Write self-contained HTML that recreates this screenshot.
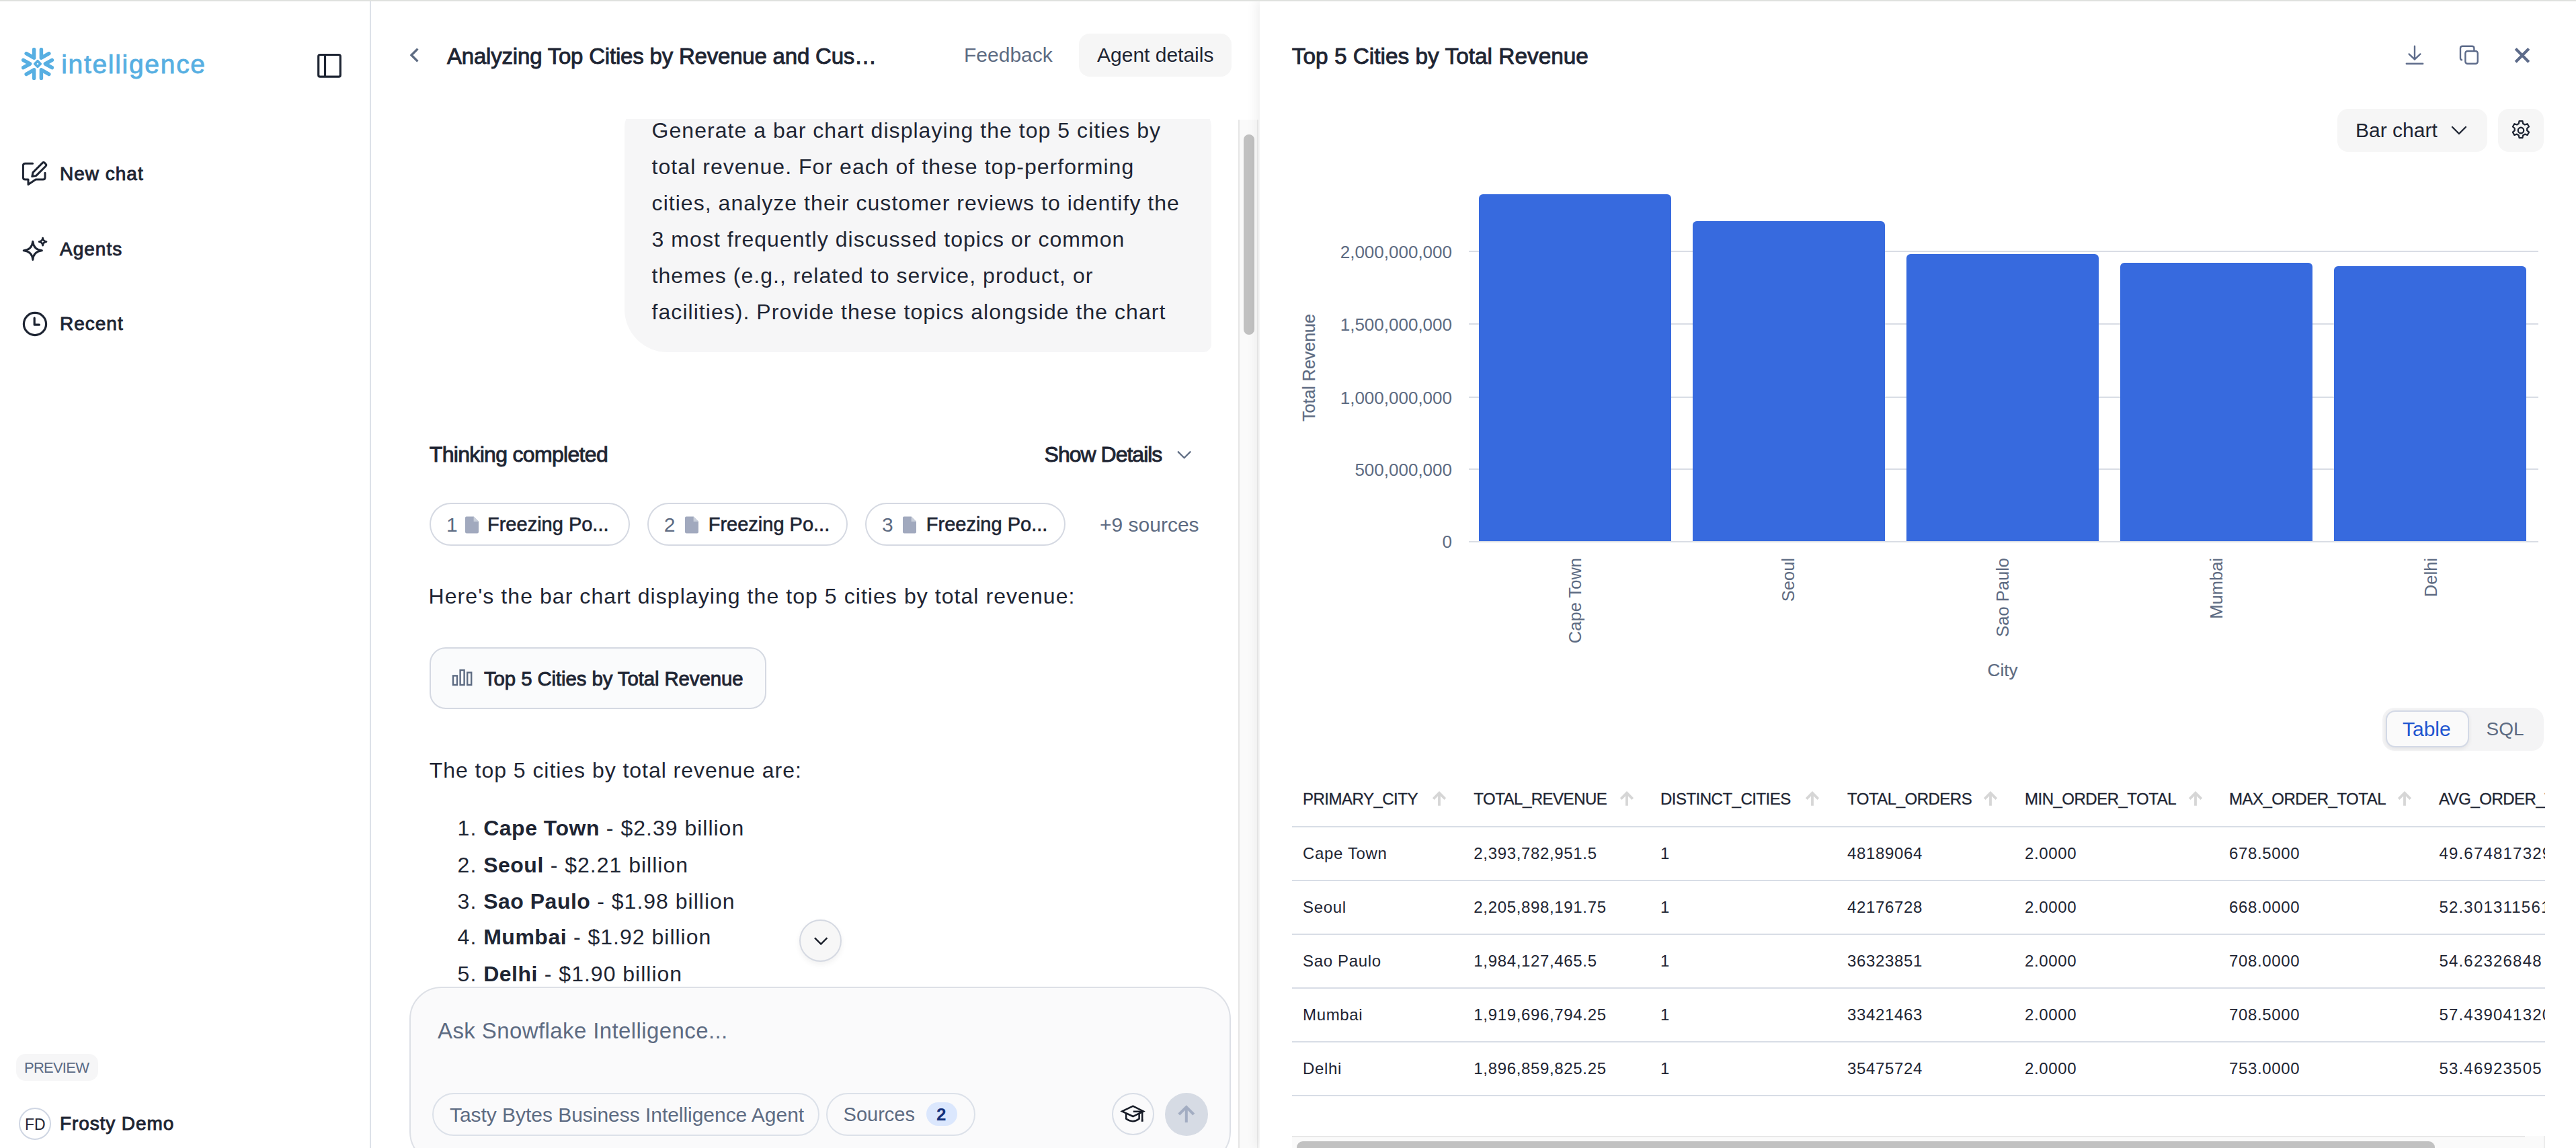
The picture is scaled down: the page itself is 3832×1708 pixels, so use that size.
<!DOCTYPE html>
<html><head><meta charset="utf-8">
<style>
html,body{margin:0;padding:0;background:#fff;overflow:hidden;}
#root{zoom:2;position:relative;width:1916px;height:854px;overflow:hidden;background:#fff;font-family:"Liberation Sans",sans-serif;color:#1e2533;}
.a{position:absolute;white-space:nowrap;line-height:1;}
.topbar{position:absolute;left:0;top:0;width:1916px;height:1px;background:#dfe1de;z-index:50;}
#side{position:absolute;left:0;top:0;width:275px;height:854px;border-right:1px solid #dde1e9;background:#fff;}
#mid{position:absolute;left:276px;top:0;width:661px;height:854px;background:#fff;}
#right{position:absolute;left:937px;top:0;width:979px;height:854px;background:#fff;box-shadow:-2px 0 8px rgba(0,0,0,0.07);}
svg{display:block;}
.sb{-webkit-text-stroke:0.45px currentColor;}
.md{-webkit-text-stroke:0.3px currentColor;}
</style></head>
<body><div id="root">
<div class="topbar"></div>

<!-- SIDEBAR -->
<div id="side">
  <svg class="a" style="left:16px;top:35.5px" width="24" height="24" viewBox="0 0 24 24" fill="none" stroke="#57afe2" stroke-width="2.75" stroke-linecap="round" stroke-linejoin="round">
    <path d="M9.3 1.3V7.6L3.6 4.3"/>
    <path d="M14.7 1.3V7.6L20.4 4.3"/>
    <path d="M9.3 22.7V16.4L3.6 19.7"/>
    <path d="M14.7 22.7V16.4L20.4 19.7"/>
    <path d="M1.3 9.2L6.3 12L1.3 14.8"/>
    <path d="M22.7 9.2L17.7 12L22.7 14.8"/>
    <path d="M12 9.9L14.1 12L12 14.1L9.9 12Z" stroke-width="1.9"/>
  </svg>
  <div class="a" style="left:45.6px;top:37.9px;font-size:19.5px;letter-spacing:0.85px;color:#57afe2;-webkit-text-stroke:0.4px #57afe2;">intelligence</div>
  <svg class="a" style="left:235px;top:39px" width="20" height="20" viewBox="0 0 20 20" fill="none" stroke="#1e2533" stroke-width="1.6">
    <rect x="1.85" y="1.75" width="16.3" height="16.3" rx="1.2"/>
    <path d="M6.75 1.75V18.05"/>
  </svg>

  <!-- nav -->
  <svg class="a" style="left:16px;top:119px" width="20" height="20" viewBox="0 0 20 20" fill="none" stroke="#1e2533" stroke-width="1.5" stroke-linejoin="round" stroke-linecap="round">
    <path d="M8.3 2.6H2.7Q1.2 2.6 1.2 4.1V13Q1.2 14.5 2.7 14.5H5V18.3L10.6 14.5H16Q17.5 14.5 17.5 13V9.6"/>
    <path d="M7.9 12.3L8.5 9.3L15.6 2.2Q16.4 1.4 17.2 2.2L18 3Q18.8 3.8 18 4.6L10.9 11.7Z"/>
  </svg>
  <div class="a sb" style="left:44.5px;top:122.5px;font-size:14px;letter-spacing:0.5px;">New chat</div>

  <svg class="a" style="left:16px;top:176px" width="20" height="20" viewBox="0 0 20 20" fill="none" stroke="#1e2533" stroke-width="1.5" stroke-linejoin="round">
    <path d="M8.4 3.6Q9 9.8 15.2 10.4Q9 11 8.4 17.2Q7.8 11 1.6 10.4Q7.8 9.8 8.4 3.6Z"/>
    <path d="M15.8 1.1Q16.1 3.5 18.5 3.8Q16.1 4.1 15.8 6.5Q15.5 4.1 13.1 3.8Q15.5 3.5 15.8 1.1Z" stroke-width="1.4"/>
  </svg>
  <div class="a sb" style="left:44.5px;top:178.5px;font-size:14px;letter-spacing:0.5px;">Agents</div>

  <svg class="a" style="left:16px;top:231px" width="20" height="20" viewBox="0 0 20 20" fill="none" stroke="#1e2533" stroke-width="1.6" stroke-linecap="round" stroke-linejoin="round">
    <circle cx="10" cy="10" r="8.3"/>
    <path d="M9.6 5.6V10.6H13.2"/>
  </svg>
  <div class="a sb" style="left:44.5px;top:234px;font-size:14px;letter-spacing:0.5px;">Recent</div>

  <div class="a" style="left:12px;top:784px;width:61px;height:20px;background:#f6f6f7;border-radius:7px;"></div>
  <div class="a" style="left:18px;top:789px;font-size:11px;color:#5a6a85;letter-spacing:-0.38px;">PREVIEW</div>

  <div class="a" style="left:14px;top:824px;width:22px;height:22px;border:1px solid #cfd6e3;border-radius:50%;"></div>
  <div class="a" style="left:18.5px;top:831px;font-size:11.5px;color:#1e2533;">FD</div>
  <div class="a sb" style="left:44.5px;top:829px;font-size:14px;letter-spacing:0.45px;">Frosty Demo</div>
</div>

<!-- MIDDLE -->
<div id="mid">
  <svg class="a" style="left:26px;top:33px" width="14" height="16" viewBox="0 0 14 16" fill="none" stroke="#5d6b82" stroke-width="1.7" stroke-linecap="butt" stroke-linejoin="miter">
    <path d="M8.7 3.3L4 8L8.7 12.7"/>
  </svg>
  <div class="a sb" style="left:56.5px;top:33.4px;font-size:16.5px;letter-spacing:-0.1px;">Analyzing Top Cities by Revenue and Cus…</div>
  <div class="a" style="left:441px;top:33.5px;font-size:15px;color:#5d6b82;">Feedback</div>
  <div class="a" style="left:526.6px;top:25px;width:113.4px;height:32px;background:#f6f6f6;border-radius:8px;"></div>
  <div class="a" style="left:540px;top:33.5px;font-size:15px;color:#1e2533;">Agent details</div>

  <!-- scroll area -->
  <div class="a" style="left:0;top:88.5px;width:661px;height:765.5px;overflow:hidden;">
    <div class="a" style="left:188.5px;top:-10px;width:436.3px;height:183.5px;background:#f6f6f7;border-radius:16px 16px 6px 32px;"></div>
    <div class="a" style="left:208.8px;top:-5px;font-size:16px;line-height:27px;letter-spacing:0.52px;white-space:pre;color:#1e2533;">Generate a bar chart displaying the top 5 cities by
total revenue. For each of these top-performing
cities, analyze their customer reviews to identify the
3 most frequently discussed topics or common
themes (e.g., related to service, product, or
facilities). Provide these topics alongside the chart</div>
  </div>
  <!-- scrollbar -->
  <div class="a" style="left:645px;top:89px;width:15px;height:765px;background:#fafafa;border-left:1px solid #e6e6e6;border-right:1px solid #ececec;box-sizing:border-box;"></div>
  <div class="a" style="left:649px;top:100px;width:8px;height:149px;background:#c1c1c1;border-radius:4px;"></div>

  <div class="a sb" style="left:43.4px;top:330px;font-size:16px;letter-spacing:-0.34px;">Thinking completed</div>
  <div class="a sb" style="left:500.8px;top:330px;font-size:16px;letter-spacing:-0.5px;">Show Details</div>
  <svg class="a" style="left:598px;top:333px" width="13" height="10" viewBox="0 0 13 10" fill="none" stroke="#5d6b82" stroke-width="1.1" stroke-linecap="butt" stroke-linejoin="miter"><path d="M2 2.8L6.8 7.6L11.6 2.8"/></svg>

  <!-- source pills -->
  <div class="a" style="left:43.4px;top:374px;width:149px;height:32px;border:1px solid #d5d9e2;border-radius:16px;box-sizing:border-box;"></div>
  <div class="a" style="left:205.25px;top:374px;width:149px;height:32px;border:1px solid #d5d9e2;border-radius:16px;box-sizing:border-box;"></div>
  <div class="a" style="left:367.3px;top:374px;width:149px;height:32px;border:1px solid #d5d9e2;border-radius:16px;box-sizing:border-box;"></div>
  <div class="a" style="left:56.05px;top:383px;font-size:15px;color:#5d6b82;">1</div>
  <svg class="a" style="left:69.40px;top:384px" width="11" height="13" viewBox="0 0 11 13"><path d="M0.5 1.2Q0.5 0.3 1.4 0.3H6.8L10.5 4V11.8Q10.5 12.7 9.6 12.7H1.4Q0.5 12.7 0.5 11.8Z" fill="#a1a9be"/><path d="M6.8 0.3V4H10.5" fill="#c9cfdb"/></svg>
  <div class="a" style="left:86.50px;top:383px;font-size:14.5px;letter-spacing:0px;-webkit-text-stroke:0.3px #1e2533;">Freezing Po...</div>
  <div class="a" style="left:217.90px;top:383px;font-size:15px;color:#5d6b82;">2</div>
  <svg class="a" style="left:233.15px;top:384px" width="11" height="13" viewBox="0 0 11 13"><path d="M0.5 1.2Q0.5 0.3 1.4 0.3H6.8L10.5 4V11.8Q10.5 12.7 9.6 12.7H1.4Q0.5 12.7 0.5 11.8Z" fill="#a1a9be"/><path d="M6.8 0.3V4H10.5" fill="#c9cfdb"/></svg>
  <div class="a" style="left:250.85px;top:383px;font-size:14.5px;letter-spacing:0px;-webkit-text-stroke:0.3px #1e2533;">Freezing Po...</div>
  <div class="a" style="left:379.95px;top:383px;font-size:15px;color:#5d6b82;">3</div>
  <svg class="a" style="left:395.20px;top:384px" width="11" height="13" viewBox="0 0 11 13"><path d="M0.5 1.2Q0.5 0.3 1.4 0.3H6.8L10.5 4V11.8Q10.5 12.7 9.6 12.7H1.4Q0.5 12.7 0.5 11.8Z" fill="#a1a9be"/><path d="M6.8 0.3V4H10.5" fill="#c9cfdb"/></svg>
  <div class="a" style="left:412.90px;top:383px;font-size:14.5px;letter-spacing:0px;-webkit-text-stroke:0.3px #1e2533;">Freezing Po...</div>
  
  <div class="a" style="left:542px;top:383px;font-size:15px;color:#5d6b82;">+9 sources</div>

  <div class="a" style="left:42.8px;top:435.3px;font-size:16px;letter-spacing:0.53px;">Here's the bar chart displaying the top 5 cities by total revenue:</div>

  <div class="a" style="left:43.35px;top:481.25px;width:250.65px;height:46px;border:1px solid #d5d9e2;border-radius:12px;background:#fafbfc;box-sizing:border-box;"></div>
  <svg class="a" style="left:60px;top:497.5px" width="16" height="13" viewBox="0 0 16 13" fill="none" stroke="#5d6b82" stroke-width="1.2"><rect x="1" y="5.2" width="3" height="6.8"/><rect x="6.3" y="1" width="3" height="11"/><rect x="11.6" y="2.8" width="3" height="9.2"/></svg>
  <div class="a sb" style="left:84px;top:497.6px;font-size:14.7px;letter-spacing:-0.05px;">Top 5 Cities by Total Revenue</div>

  <div class="a" style="left:43.35px;top:565px;font-size:16px;letter-spacing:0.48px;">The top 5 cities by total revenue are:</div>
  <div class="a" style="left:64.3px;top:607.96px;font-size:16px;letter-spacing:0.5px;">1. <b style="letter-spacing:0.25px">Cape Town</b> - $2.39 billion</div>
  <div class="a" style="left:64.3px;top:635.46px;font-size:16px;letter-spacing:0.5px;">2. <b style="letter-spacing:0.25px">Seoul</b> - $2.21 billion</div>
  <div class="a" style="left:64.3px;top:662.36px;font-size:16px;letter-spacing:0.5px;">3. <b style="letter-spacing:0.25px">Sao Paulo</b> - $1.98 billion</div>
  <div class="a" style="left:64.3px;top:689.21px;font-size:16px;letter-spacing:0.5px;">4. <b style="letter-spacing:0.25px">Mumbai</b> - $1.92 billion</div>
  <div class="a" style="left:64.3px;top:716.66px;font-size:16px;letter-spacing:0.5px;">5. <b style="letter-spacing:0.25px">Delhi</b> - $1.90 billion</div>
  

  <!-- scroll down btn -->
  <div class="a" style="left:318.4px;top:684.1px;width:31.6px;height:31.6px;border:1px solid #d5d9e2;border-radius:50%;background:#f7f7f7;box-sizing:border-box;box-shadow:0 2px 4px rgba(0,0,0,0.06);"></div>
  <svg class="a" style="left:327px;top:693px" width="14" height="14" viewBox="0 0 14 14" fill="none" stroke="#161b26" stroke-width="1.15" stroke-linecap="butt" stroke-linejoin="miter"><path d="M3 4.7L7.6 9.3L12.2 4.7"/></svg>

  <!-- input -->
  <div class="a" style="left:28.25px;top:734px;width:611.25px;height:132px;border:1px solid #dde0e6;border-radius:24px;background:#fafafb;box-sizing:border-box;"></div>
  <div class="a" style="left:49.5px;top:758.5px;font-size:16.5px;letter-spacing:0.2px;color:#5d6b82;">Ask Snowflake Intelligence...</div>
  <div class="a" style="left:45.25px;top:813px;width:288.25px;height:32px;border:1px solid #dce1e9;border-radius:16px;box-sizing:border-box;"></div>
  <div class="a" style="left:58.5px;top:821.8px;font-size:15px;letter-spacing:-0.02px;color:#5d6b82;">Tasty Bytes Business Intelligence Agent</div>
  <div class="a" style="left:338.5px;top:813px;width:111px;height:32px;border:1px solid #dce1e9;border-radius:16px;box-sizing:border-box;"></div>
  <div class="a" style="left:351.3px;top:821.8px;font-size:14.5px;color:#5d6b82;">Sources</div>
  <div class="a" style="left:412.75px;top:820px;width:23px;height:17.5px;border-radius:9px;background:#dbe7fd;"></div>
  <div class="a" style="left:420.5px;top:822.5px;font-size:13px;font-weight:700;color:#14307a;">2</div>
  <div class="a" style="left:551px;top:813px;width:31.5px;height:31.5px;border:1px solid #d8dde6;border-radius:50%;box-sizing:border-box;background:#fafafb;"></div>
  <svg class="a" style="left:551px;top:813px" width="32" height="32" viewBox="0 0 32 32" fill="none" stroke="#161b26" stroke-width="1.25" stroke-linejoin="miter"><path d="M7.6 13.7L15.7 9.8L23.5 13.7L15.7 17.5Z"/><path d="M10.6 15.2V19.3Q15.6 22.9 20.3 19.3V15.2"/><path d="M15.9 13.9H22.6V20.4" /><path d="M21.9 20.6H23.3" stroke-width="1.6"/></svg>
  <div class="a" style="left:590.7px;top:813px;width:31.75px;height:31.75px;border-radius:50%;background:#d6dbe4;"></div>
  <svg class="a" style="left:590.7px;top:813px" width="32" height="32" viewBox="0 0 32 32" fill="none" stroke="#a3adc2" stroke-width="2" stroke-linecap="butt" stroke-linejoin="miter"><path d="M15.9 10.2V22M10.4 16L15.9 10.5L21.4 16"/></svg>
</div>
<div id="right">
  <div class="a sb" style="left:23.90px;top:33.3px;font-size:16.7px;">Top 5 Cities by Total Revenue</div>
  <svg class="a" style="left:850.80px;top:33px" width="16" height="16" viewBox="0 0 16 16" fill="none" stroke="#5d6b8a" stroke-width="1.2" stroke-linecap="round" stroke-linejoin="round"><path d="M8 1.4V11.2M3.8 7.2L8 11.2L12.2 7.2M1.9 14.4H14.1"/></svg>
  <svg class="a" style="left:891.30px;top:33px" width="16" height="16" viewBox="0 0 16 16" fill="none" stroke="#5d6b8a" stroke-width="1.2" stroke-linejoin="round"><rect x="5.2" y="5" width="9.2" height="9.4" rx="1.6"/><path d="M3 11.6Q1.5 11.6 1.5 10.2V2.9Q1.5 1.4 3 1.4H10.2Q11.7 1.4 11.7 2.9V5"/></svg>
  <svg class="a" style="left:931.00px;top:33px" width="16" height="16" viewBox="0 0 16 16" fill="none" stroke="#5d6b8a" stroke-width="2.1" stroke-linecap="butt"><path d="M3.1 3.3L12.9 13.1M12.9 3.3L3.1 13.1"/></svg>
  <div class="a" style="left:801.50px;top:81px;width:111.5px;height:32px;background:#f6f6f6;border-radius:8px;"></div>
  <div class="a" style="left:815.00px;top:89.3px;font-size:15px;color:#1e2533;">Bar chart</div>
  <svg class="a" style="left:885.00px;top:90px" width="14" height="14" viewBox="0 0 14 14" fill="none" stroke="#1e2533" stroke-width="1.2" stroke-linecap="round" stroke-linejoin="round"><path d="M2 4.5L7 9.5L12 4.5"/></svg>
  <div class="a" style="left:921.00px;top:81px;width:34px;height:32px;background:#f6f6f6;border-radius:8px;"></div>
  <svg class="a" style="left:929.70px;top:88.6px" width="17" height="17" viewBox="0 0 24 24" fill="none" stroke="#1e2533" stroke-width="1.6" stroke-linejoin="round"><path d="M10.3 2.2h3.4l.6 2.7 1.9 1.1 2.6-.9 1.7 3-2 1.8v2.2l2 1.8-1.7 3-2.6-.9-1.9 1.1-.6 2.7h-3.4l-.6-2.7-1.9-1.1-2.6.9-1.7-3 2-1.8v-2.2l-2-1.8 1.7-3 2.6.9 1.9-1.1z"/><circle cx="12" cy="12" r="3"/></svg>
  <div class="a" style="left:155.70px;top:186.60px;width:795.10px;height:1px;background:#d9dde5;"></div>
  <div class="a" style="left:0;width:143.00px;text-align:right;top:180.90px;font-size:13px;color:#5d6b82;">2,000,000,000</div>
  <div class="a" style="left:155.70px;top:240.60px;width:795.10px;height:1px;background:#d9dde5;"></div>
  <div class="a" style="left:0;width:143.00px;text-align:right;top:234.90px;font-size:13px;color:#5d6b82;">1,500,000,000</div>
  <div class="a" style="left:155.70px;top:295.00px;width:795.10px;height:1px;background:#d9dde5;"></div>
  <div class="a" style="left:0;width:143.00px;text-align:right;top:289.30px;font-size:13px;color:#5d6b82;">1,000,000,000</div>
  <div class="a" style="left:155.70px;top:348.70px;width:795.10px;height:1px;background:#d9dde5;"></div>
  <div class="a" style="left:0;width:143.00px;text-align:right;top:343.00px;font-size:13px;color:#5d6b82;">500,000,000</div>
  <div class="a" style="left:155.70px;top:402.35px;width:795.10px;height:1px;background:#d9dde5;"></div>
  <div class="a" style="left:0;width:143.00px;text-align:right;top:396.65px;font-size:13px;color:#5d6b82;">0</div>
  <div class="a" style="left:163.20px;top:144.60px;width:143px;height:257.90px;background:#376ade;border-radius:3px 3px 0 0;"></div>
  <div class="a" style="left:322.00px;top:164.65px;width:143px;height:237.85px;background:#376ade;border-radius:3px 3px 0 0;"></div>
  <div class="a" style="left:481.00px;top:188.75px;width:143px;height:213.75px;background:#376ade;border-radius:3px 3px 0 0;"></div>
  <div class="a" style="left:640.00px;top:195.50px;width:143px;height:207.00px;background:#376ade;border-radius:3px 3px 0 0;"></div>
  <div class="a" style="left:799.00px;top:197.95px;width:143px;height:204.55px;background:#376ade;border-radius:3px 3px 0 0;"></div>
  <div class="a" style="left:155.70px;top:402.50px;width:795.10px;height:1px;background:#d9dde5;"></div>
  <div class="a" style="left:36.70px;top:273.5px;font-size:12.5px;color:#5d6b82;transform:translate(-50%,-50%) rotate(-90deg);-webkit-text-stroke:0.1px #5d6b82;">Total Revenue</div>
  <div class="a" style="left:234.50px;top:415px;width:0;height:0;"><div style="position:absolute;right:0;top:-6.5px;transform:rotate(-90deg);transform-origin:100% 50%;font-size:12.75px;line-height:13px;color:#5d6b82;white-space:nowrap;">Cape Town</div></div>
  <div class="a" style="left:393.00px;top:415px;width:0;height:0;"><div style="position:absolute;right:0;top:-6.5px;transform:rotate(-90deg);transform-origin:100% 50%;font-size:12.75px;line-height:13px;color:#5d6b82;white-space:nowrap;">Seoul</div></div>
  <div class="a" style="left:552.50px;top:415px;width:0;height:0;"><div style="position:absolute;right:0;top:-6.5px;transform:rotate(-90deg);transform-origin:100% 50%;font-size:12.75px;line-height:13px;color:#5d6b82;white-space:nowrap;">Sao Paulo</div></div>
  <div class="a" style="left:711.50px;top:415px;width:0;height:0;"><div style="position:absolute;right:0;top:-6.5px;transform:rotate(-90deg);transform-origin:100% 50%;font-size:12.75px;line-height:13px;color:#5d6b82;white-space:nowrap;">Mumbai</div></div>
  <div class="a" style="left:871.00px;top:415px;width:0;height:0;"><div style="position:absolute;right:0;top:-6.5px;transform:rotate(-90deg);transform-origin:100% 50%;font-size:12.75px;line-height:13px;color:#5d6b82;white-space:nowrap;">Delhi</div></div>
  <div class="a" style="left:552.50px;top:492px;font-size:13px;color:#5d6b82;transform:translateX(-50%);-webkit-text-stroke:0.1px #5d6b82;">City</div>
  <div class="a" style="left:834.80px;top:526.5px;width:120px;height:32px;background:#f4f4f5;border-radius:9px;"></div>
  <div class="a" style="left:837.60px;top:528.6px;width:62px;height:27.4px;background:#fafafa;border:1px solid #d3d9e6;border-radius:7px;box-sizing:border-box;box-shadow:0 1px 3px rgba(0,0,0,0.08);"></div>
  <div class="a" style="left:850.00px;top:534.8px;font-size:15px;color:#1f55d0;">Table</div>
  <div class="a" style="left:912.30px;top:535.3px;font-size:14px;color:#5d6b82;">SQL</div>
  <div class="a" style="left:24.00px;top:560px;width:931.80px;height:294px;overflow:hidden;">
    <div class="a" style="left:8.00px;top:28.64px;font-size:12px;letter-spacing:-0.25px;-webkit-text-stroke:0.15px #1e2533;">PRIMARY_CITY</div>
    <div class="a" style="left:135.15px;top:28.64px;font-size:12px;letter-spacing:-0.25px;-webkit-text-stroke:0.15px #1e2533;">TOTAL_REVENUE</div>
    <div class="a" style="left:273.95px;top:28.64px;font-size:12px;letter-spacing:-0.25px;-webkit-text-stroke:0.15px #1e2533;">DISTINCT_CITIES</div>
    <div class="a" style="left:413.00px;top:28.64px;font-size:12px;letter-spacing:-0.25px;-webkit-text-stroke:0.15px #1e2533;">TOTAL_ORDERS</div>
    <div class="a" style="left:545.00px;top:28.64px;font-size:12px;letter-spacing:-0.25px;-webkit-text-stroke:0.15px #1e2533;">MIN_ORDER_TOTAL</div>
    <div class="a" style="left:697.00px;top:28.64px;font-size:12px;letter-spacing:-0.25px;-webkit-text-stroke:0.15px #1e2533;">MAX_ORDER_TOTAL</div>
    <div class="a" style="left:853.00px;top:28.64px;font-size:12px;letter-spacing:-0.25px;-webkit-text-stroke:0.15px #1e2533;">AVG_ORDER_TOTAL</div>
    <svg class="a" style="left:104.20px;top:28.60px" width="11" height="11" viewBox="0 0 11 11" fill="none" stroke="#d6d6d6" stroke-width="1.9" stroke-linejoin="miter"><path d="M5.5 10.9V2M1.1 5.8L5.5 1.4L9.9 5.8"/></svg>
    <svg class="a" style="left:243.50px;top:28.60px" width="11" height="11" viewBox="0 0 11 11" fill="none" stroke="#d6d6d6" stroke-width="1.9" stroke-linejoin="miter"><path d="M5.5 10.9V2M1.1 5.8L5.5 1.4L9.9 5.8"/></svg>
    <svg class="a" style="left:381.70px;top:28.60px" width="11" height="11" viewBox="0 0 11 11" fill="none" stroke="#d6d6d6" stroke-width="1.9" stroke-linejoin="miter"><path d="M5.5 10.9V2M1.1 5.8L5.5 1.4L9.9 5.8"/></svg>
    <svg class="a" style="left:513.95px;top:28.60px" width="11" height="11" viewBox="0 0 11 11" fill="none" stroke="#d6d6d6" stroke-width="1.9" stroke-linejoin="miter"><path d="M5.5 10.9V2M1.1 5.8L5.5 1.4L9.9 5.8"/></svg>
    <svg class="a" style="left:666.45px;top:28.60px" width="11" height="11" viewBox="0 0 11 11" fill="none" stroke="#d6d6d6" stroke-width="1.9" stroke-linejoin="miter"><path d="M5.5 10.9V2M1.1 5.8L5.5 1.4L9.9 5.8"/></svg>
    <svg class="a" style="left:822.20px;top:28.60px" width="11" height="11" viewBox="0 0 11 11" fill="none" stroke="#d6d6d6" stroke-width="1.9" stroke-linejoin="miter"><path d="M5.5 10.9V2M1.1 5.8L5.5 1.4L9.9 5.8"/></svg>
    <div class="a" style="left:0;top:54.50px;width:932px;height:1px;background:#d8dde6;"></div>
    <div class="a" style="left:0;top:94.30px;width:932px;height:1px;background:#d8dde6;"></div>
    <div class="a" style="left:0;top:134.30px;width:932px;height:1px;background:#d8dde6;"></div>
    <div class="a" style="left:0;top:174.50px;width:932px;height:1px;background:#d8dde6;"></div>
    <div class="a" style="left:0;top:214.50px;width:932px;height:1px;background:#d8dde6;"></div>
    <div class="a" style="left:0;top:254.50px;width:932px;height:1px;background:#d8dde6;"></div>
    <div class="a" style="left:8.00px;top:69.14px;font-size:12px;letter-spacing:0.33px;">Cape Town</div>
    <div class="a" style="left:135.15px;top:69.14px;font-size:12px;letter-spacing:0.33px;">2,393,782,951.5</div>
    <div class="a" style="left:273.95px;top:69.14px;font-size:12px;letter-spacing:0.33px;">1</div>
    <div class="a" style="left:413.00px;top:69.14px;font-size:12px;letter-spacing:0.33px;">48189064</div>
    <div class="a" style="left:545.00px;top:69.14px;font-size:12px;letter-spacing:0.33px;">2.0000</div>
    <div class="a" style="left:697.00px;top:69.14px;font-size:12px;letter-spacing:0.33px;">678.5000</div>
    <div class="a" style="left:853.20px;top:69.14px;font-size:12px;letter-spacing:0.60px;">49.674817329545</div>
    <div class="a" style="left:8.00px;top:109.14px;font-size:12px;letter-spacing:0.33px;">Seoul</div>
    <div class="a" style="left:135.15px;top:109.14px;font-size:12px;letter-spacing:0.33px;">2,205,898,191.75</div>
    <div class="a" style="left:273.95px;top:109.14px;font-size:12px;letter-spacing:0.33px;">1</div>
    <div class="a" style="left:413.00px;top:109.14px;font-size:12px;letter-spacing:0.33px;">42176728</div>
    <div class="a" style="left:545.00px;top:109.14px;font-size:12px;letter-spacing:0.33px;">2.0000</div>
    <div class="a" style="left:697.00px;top:109.14px;font-size:12px;letter-spacing:0.33px;">668.0000</div>
    <div class="a" style="left:853.20px;top:109.14px;font-size:12px;letter-spacing:0.60px;">52.301311561234</div>
    <div class="a" style="left:8.00px;top:149.14px;font-size:12px;letter-spacing:0.33px;">Sao Paulo</div>
    <div class="a" style="left:135.15px;top:149.14px;font-size:12px;letter-spacing:0.33px;">1,984,127,465.5</div>
    <div class="a" style="left:273.95px;top:149.14px;font-size:12px;letter-spacing:0.33px;">1</div>
    <div class="a" style="left:413.00px;top:149.14px;font-size:12px;letter-spacing:0.33px;">36323851</div>
    <div class="a" style="left:545.00px;top:149.14px;font-size:12px;letter-spacing:0.33px;">2.0000</div>
    <div class="a" style="left:697.00px;top:149.14px;font-size:12px;letter-spacing:0.33px;">708.0000</div>
    <div class="a" style="left:853.20px;top:149.14px;font-size:12px;letter-spacing:0.60px;">54.62326848</div>
    <div class="a" style="left:8.00px;top:189.14px;font-size:12px;letter-spacing:0.33px;">Mumbai</div>
    <div class="a" style="left:135.15px;top:189.14px;font-size:12px;letter-spacing:0.33px;">1,919,696,794.25</div>
    <div class="a" style="left:273.95px;top:189.14px;font-size:12px;letter-spacing:0.33px;">1</div>
    <div class="a" style="left:413.00px;top:189.14px;font-size:12px;letter-spacing:0.33px;">33421463</div>
    <div class="a" style="left:545.00px;top:189.14px;font-size:12px;letter-spacing:0.33px;">2.0000</div>
    <div class="a" style="left:697.00px;top:189.14px;font-size:12px;letter-spacing:0.33px;">708.5000</div>
    <div class="a" style="left:853.20px;top:189.14px;font-size:12px;letter-spacing:0.60px;">57.439041320123</div>
    <div class="a" style="left:8.00px;top:229.14px;font-size:12px;letter-spacing:0.33px;">Delhi</div>
    <div class="a" style="left:135.15px;top:229.14px;font-size:12px;letter-spacing:0.33px;">1,896,859,825.25</div>
    <div class="a" style="left:273.95px;top:229.14px;font-size:12px;letter-spacing:0.33px;">1</div>
    <div class="a" style="left:413.00px;top:229.14px;font-size:12px;letter-spacing:0.33px;">35475724</div>
    <div class="a" style="left:545.00px;top:229.14px;font-size:12px;letter-spacing:0.33px;">2.0000</div>
    <div class="a" style="left:697.00px;top:229.14px;font-size:12px;letter-spacing:0.33px;">753.0000</div>
    <div class="a" style="left:853.20px;top:229.14px;font-size:12px;letter-spacing:0.60px;">53.46923505</div>
    <div class="a" style="left:0;top:285.00px;width:932px;height:20px;background:#fafafa;border-right:1px solid #ececec;box-sizing:border-box;"></div>
    <div class="a" style="left:0;top:285.00px;width:917px;height:1px;background:#e8e8e8;"></div>
    <div class="a" style="left:3.30px;top:289.00px;width:846.95px;height:9px;background:#c1c1c1;border-radius:4.5px;"></div>
  </div>
</div>

</div></body></html>
